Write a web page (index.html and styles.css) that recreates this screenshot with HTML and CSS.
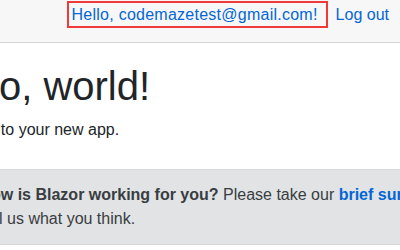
FILE: index.html
```html
<!DOCTYPE html>
<html lang="en">
  <head>
    <meta charset="UTF-8" />
    <meta name="viewport" content="width=device-width, initial-scale=1.0" />
    <title>Blazor App</title>
    <link rel="stylesheet" href="styles.css">
  </head>
  <body>
    <div class="main">
      <!-- ログイン状態 -->
      <div class="top-row">
        <a href="#" class="user-link">Hello, codemazetest@gmail.com!</a>
        <a href="#" class="logout-link">Log out</a>
      </div>

      <!-- ページ本文（左側は画面外） -->
      <div class="content">
        <h1>Hello, world!</h1>
        <p>Welcome to your new app.</p>

        <div class="alert" role="alert">
          <span class="pencil" aria-hidden="true"></span>
          <strong>How is Blazor working for you?</strong>
          <span class="nowrap">Please take our <a href="#" class="survey-link">brief survey</a></span>
          and tell us what you think.
        </div>
      </div>
    </div>
  </body>
</html>
```

FILE: styles.css
```css
html,
body {
  margin: 0;
  padding: 0;
  overflow: hidden;
  background: #fff;
}

body {
  font-family: "Liberation Sans", Arial, sans-serif;
  font-size: 16px;
  line-height: 1.5;
  color: #212529;
}

a {
  color: #0366d6;
  text-decoration: none;
}

.top-row {
  display: flex;
  justify-content: flex-end;
  align-items: flex-start;
  height: 43px;
  padding: 1px 11px 0 0;
  box-sizing: border-box;
  background-color: #f7f7f7;
  border-bottom: 1px solid #d6d5d5;
}

.user-link {
  border: 2px solid #f03a3a;
  padding: 1px 8px 0 3px;
  line-height: 22px;
  letter-spacing: 0.25px;
}

.logout-link {
  margin-left: 8px;
  padding-top: 3px;
  line-height: 22px;
}

/* 画面の左端で切れている本文 */
.content {
  margin-left: -70px;
  width: 540px;
  padding-top: 19px;
}

.content h1 {
  font-size: 40px;
  font-weight: 500;
  line-height: 1.2;
  margin: 0 0 8px;
  color: #212529;
}

.content p {
  margin: 0 0 16px;
}

.alert {
  margin-top: 27px;
  padding: 13px 20px;
  background-color: #e2e3e5;
  border: 1px solid #d6d8db;
  color: #383d41;
}

.pencil {
  display: inline-block;
  width: 16px;
  margin-right: 8px;
}

.nowrap {
  white-space: nowrap;
}

.survey-link {
  font-weight: bold;
}
```
